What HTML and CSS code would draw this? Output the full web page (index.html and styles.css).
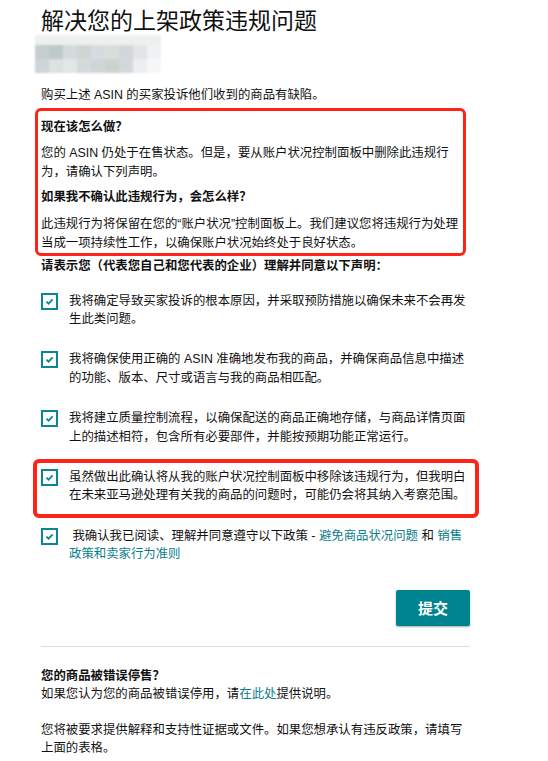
FILE: index.html
```html
<!DOCTYPE html>
<html lang="zh-CN">
<head>
    <meta charset="UTF-8">
    <meta name="viewport" content="width=device-width, initial-scale=1.0">
    <title>解决您的上架政策违规问题</title>
    <link rel="stylesheet" href="styles.css">
</head>
<body>
    <div class="page">
        <h1>解决您的上架政策违规问题</h1>

        <!-- 打码的商品信息 -->
        <div class="blurred">
            <span></span><span></span><span></span><span></span><span></span><span></span><span></span><span></span><span></span>
            <span></span><span></span><span></span><span></span><span></span><span></span><span></span><span></span><span></span>
            <span></span><span></span><span></span><span></span><span></span><span></span><span></span><span></span><span></span>
        </div>

        <p class="intro">购买上述 ASIN 的买家投诉他们收到的商品有缺陷。</p>

        <div class="mark mark-info">
            <h3>现在该怎么做？</h3>
            <p>您的 ASIN 仍处于在售状态。但是，要从账户状况控制面板中删除此违规行为，请确认下列声明。</p>
            <h3>如果我不确认此违规行为，会怎么样？</h3>
            <p>此违规行为将保留在您的“账户状况”控制面板上。我们建议您将违规行为处理当成一项持续性工作，以确保账户状况始终处于良好状态。</p>
        </div>

        <h3 class="ask">请表示您（代表您自己和您代表的企业）理解并同意以下声明：</h3>

        <ul class="checks">
            <li>
                <span class="box"><svg viewBox="0 0 17 17"><path d="M4.5 8.6 L7.3 11.3 L12.6 5.8"/></svg></span>
                <span>我将确定导致买家投诉的根本原因，并采取预防措施以确保未来不会再发生此类问题。</span>
            </li>
            <li>
                <span class="box"><svg viewBox="0 0 17 17"><path d="M4.5 8.6 L7.3 11.3 L12.6 5.8"/></svg></span>
                <span>我将确保使用正确的 ASIN 准确地发布我的商品，并确保商品信息中描述的功能、版本、尺寸或语言与我的商品相匹配。</span>
            </li>
            <li>
                <span class="box"><svg viewBox="0 0 17 17"><path d="M4.5 8.6 L7.3 11.3 L12.6 5.8"/></svg></span>
                <span>我将建立质量控制流程，以确保配送的商品正确地存储，与商品详情页面上的描述相符，包含所有必要部件，并能按预期功能正常运行。</span>
            </li>
            <li class="mark mark-item">
                <span class="box"><svg viewBox="0 0 17 17"><path d="M4.5 8.6 L7.3 11.3 L12.6 5.8"/></svg></span>
                <span>虽然做出此确认将从我的账户状况控制面板中移除该违规行为，但我明白在未来亚马逊处理有关我的商品的问题时，可能仍会将其纳入考察范围。</span>
            </li>
            <li>
                <span class="box"><svg viewBox="0 0 17 17"><path d="M4.5 8.6 L7.3 11.3 L12.6 5.8"/></svg></span>
                <span>&nbsp;我确认我已阅读、理解并同意遵守以下政策 - <a href="#">避免商品状况问题</a> 和 <a href="#">销售政策和卖家行为准则</a></span>
            </li>
        </ul>

        <div class="actions">
            <button class="submit">提交</button>
        </div>

        <hr>

        <p class="footer">
            <strong>您的商品被错误停售？</strong><br>
            如果您认为您的商品被错误停用，请<a href="#">在此处</a>提供说明。<br>
            <br>
            您将被要求提供解释和支持性证据或文件。如果您想承认有违反政策，请填写上面的表格。
        </p>
    </div>
</body>
</html>
```

FILE: styles.css
```css
body {
    font-family: "Liberation Sans", "Noto Sans CJK SC", sans-serif;
    font-size: 12.4px;
    line-height: 18.6px;
    color: #111;
    background: #fff;
    margin: 0;
}
.page {
    width: 429px;
    margin-left: 41px;
    padding-top: 6px;
}
h1 {
    font-size: 23px;
    font-weight: normal;
    line-height: 30px;
    margin: 0;
    color: #111;
}
h3 {
    font-size: 12.4px;
    font-weight: bold;
    margin: 0;
}
p {
    margin: 0;
}
a {
    color: #0a7d8c;
    text-decoration: none;
}

/* pixelated block */
.blurred {
    display: grid;
    grid-template-columns: repeat(9, 14px);
    grid-template-rows: 10px 14px 14px;
    width: 126px;
    margin: -1px 0 0 -6px;
    filter: blur(1px);
}
.blurred span:nth-child(-n+9) { background: #eef0ef; }
.blurred span:nth-child(10) { background: #c6cdcf; }
.blurred span:nth-child(11) { background: #bfc9c7; }
.blurred span:nth-child(12) { background: #d3d9dc; }
.blurred span:nth-child(13) { background: #d0d5d4; }
.blurred span:nth-child(14) { background: #d5dbe0; }
.blurred span:nth-child(15) { background: #d8dddd; }
.blurred span:nth-child(16) { background: #d2d8d9; }
.blurred span:nth-child(17) { background: #e1e5e6; }
.blurred span:nth-child(18) { background: #f0f1f2; }
.blurred span:nth-child(19) { background: #cdd5d8; }
.blurred span:nth-child(20) { background: #dde1e1; }
.blurred span:nth-child(21) { background: #e2e6e6; }
.blurred span:nth-child(22) { background: #d4d9da; }
.blurred span:nth-child(23) { background: #cfd6d8; }
.blurred span:nth-child(24) { background: #cbd3cf; }
.blurred span:nth-child(25) { background: #d2d8db; }
.blurred span:nth-child(26) { background: #eceeef; }
.blurred span:nth-child(27) { background: #f6f7f7; }

.intro {
    margin-top: 13px;
}

/* red annotation frames */
.mark {
    border: 3px solid #ff2317;
    border-radius: 6px;
}
.mark-info {
    margin: 3px 4px 0 -6px;
    padding: 7px 0 1px 3px;
}
.mark-info p {
    margin-top: 6px;
}
.mark-info h3 {
    margin-top: 7px;
}
.mark-info h3:first-child {
    margin-top: 0;
}
.mark-info h3 + p {
    margin-top: 8px;
}

.ask {
    margin-top: 1px;
}

.checks {
    list-style: none;
    padding: 0;
    margin: 16px 0 0;
    display: flex;
    flex-direction: column;
    gap: 21.5px;
}
.checks li {
    display: flex;
    gap: 11px;
}
.box {
    flex: none;
    width: 17px;
    height: 17px;
    box-sizing: border-box;
    border: 2px solid #0a8593;
    margin-top: 1px;
    display: flex;
}
.box svg {
    width: 13px;
    height: 13px;
    fill: none;
    stroke: #0a8593;
    stroke-width: 2.3;
    margin: 0;
}
.checks .mark-item {
    border-width: 4px;
    margin: -8.7px -9px -12.7px -8px;
    padding: 4.7px 5px 8.7px 4px;
}

.actions {
    display: flex;
    justify-content: flex-end;
    margin-top: 26px;
}
.submit {
    width: 74px;
    height: 36px;
    border: none;
    border-radius: 2px;
    background-color: #008391;
    color: #fff;
    font-family: "Liberation Sans", "Noto Sans CJK SC", sans-serif;
    font-size: 15px;
    font-weight: bold;
    box-shadow: 0 1px 2px rgba(0, 0, 0, 0.35);
    cursor: pointer;
}
hr {
    border: none;
    border-top: 1px solid #dcdcdc;
    margin: 20px 0 0;
}
.footer {
    margin-top: 20px;
    line-height: 18px;
}
```
